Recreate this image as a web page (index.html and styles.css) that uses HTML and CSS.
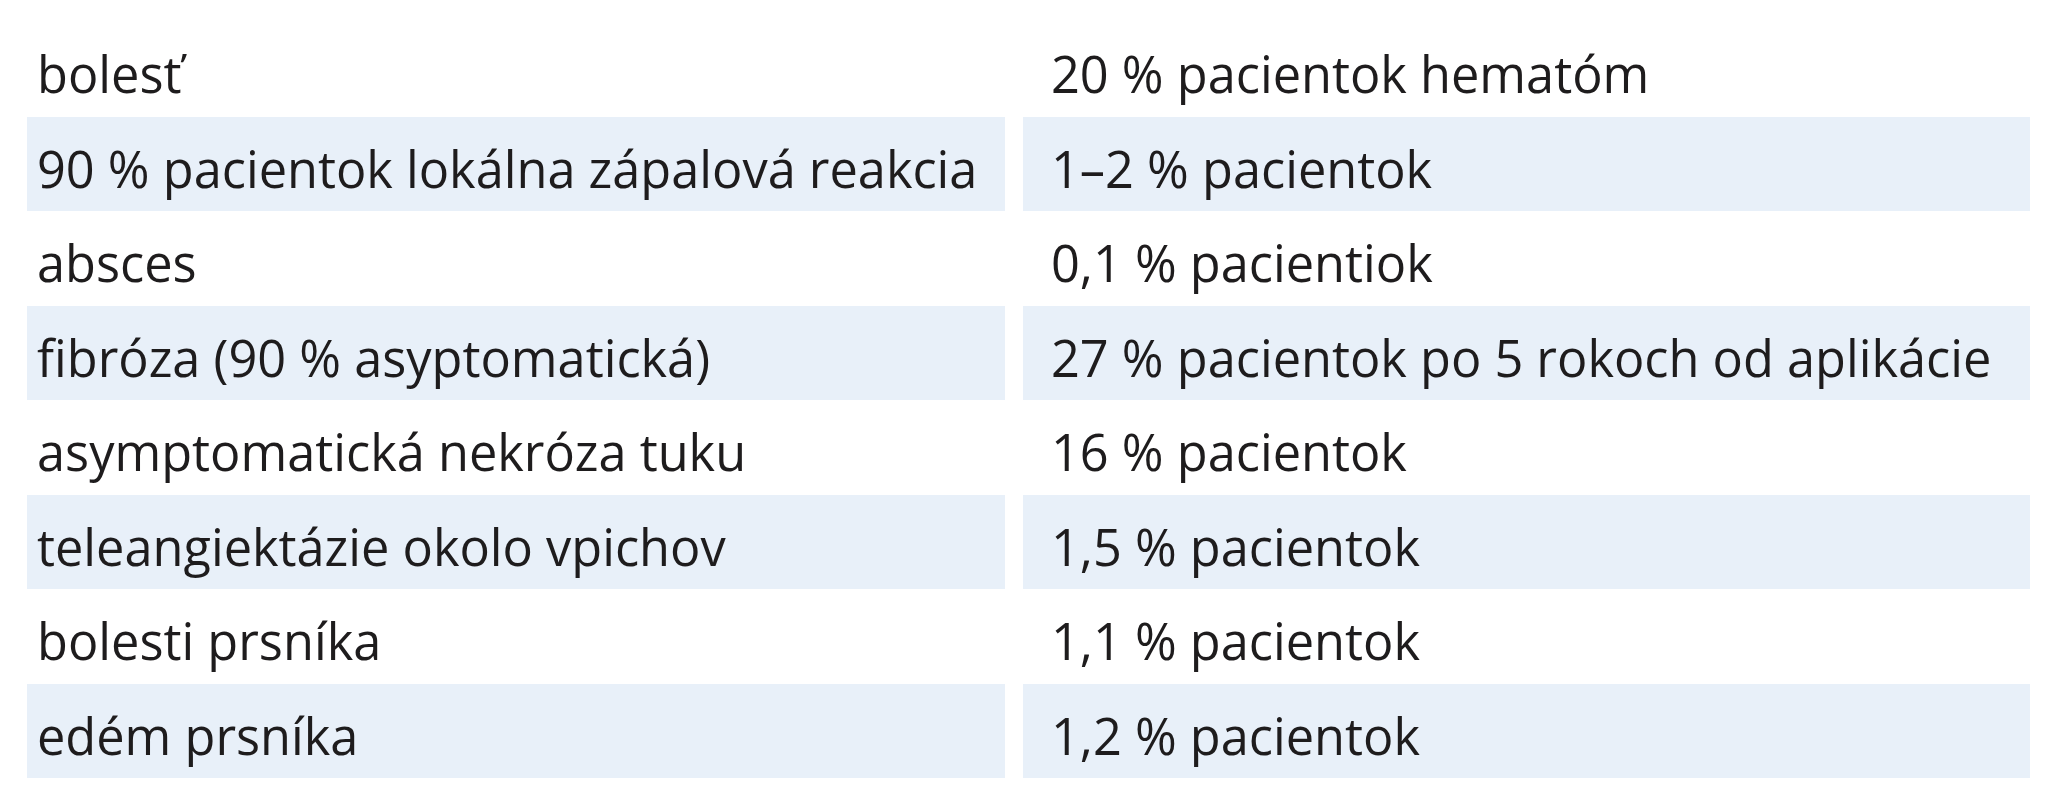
FILE: index.html
```html
<!DOCTYPE html>
<html lang="sk">
<head>
<meta charset="utf-8">
<title>Tabuľka</title>
<link rel="stylesheet" href="styles.css">
</head>
<body>
<div class="table">
  <div class="cell left">bolesť</div>
  <div class="cell right">20 % pacientok hematóm</div>
  <div class="cell left alt">90 % pacientok lokálna zápalová reakcia</div>
  <div class="cell right alt">1–2 % pacientok</div>
  <div class="cell left">absces</div>
  <div class="cell right">0,1 % pacientiok</div>
  <div class="cell left alt">fibróza (90 % asyptomatická)</div>
  <div class="cell right alt">27 % pacientok po 5 rokoch od aplikácie</div>
  <div class="cell left">asymptomatická nekróza tuku</div>
  <div class="cell right">16 % pacientok</div>
  <div class="cell left alt">teleangiektázie okolo vpichov</div>
  <div class="cell right alt">1,5 % pacientok</div>
  <div class="cell left">bolesti prsníka</div>
  <div class="cell right">1,1 % pacientok</div>
  <div class="cell left alt">edém prsníka</div>
  <div class="cell right alt">1,2 % pacientok</div>
</div>
</body>
</html>
```
FILE: styles.css
```css
html, body {
  margin: 0;
  padding: 0;
  background: #ffffff;
}
body {
  padding: 22px 0 0 27px;
  font-family: "Open Sans", "Noto Sans", sans-serif;
  color: #1e1c1d;
}
.table {
  display: grid;
  grid-template-columns: 978px 1007px;
  grid-auto-rows: 94.5px;
  column-gap: 18px;
}
.cell {
  display: flex;
  align-items: center;
  font-size: 50.5px;
  letter-spacing: 0;
  white-space: nowrap;
  padding-top: 9px;
  box-sizing: border-box;
}
.left {
  padding-left: 10px;
}
.right {
  padding-left: 28px;
}
.alt {
  background: #e8f0f9;
}
```
